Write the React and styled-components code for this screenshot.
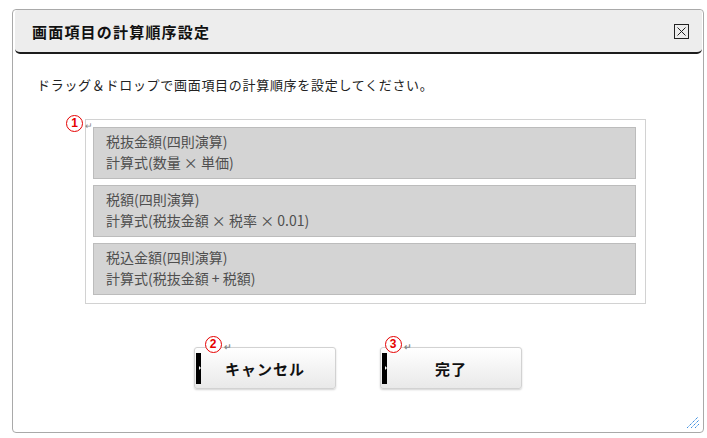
import React from 'react';
import styled, { createGlobalStyle } from 'styled-components';

const GlobalStyle = createGlobalStyle`
  body {
    margin: 0;
    background: #fff;
    font-family: "Noto Sans CJK JP", "Noto Sans", sans-serif;
  }
`;

const Dialog = styled.div`
  position: relative;
  box-sizing: border-box;
  width: 692px;
  height: 424px;
  margin: 9px 0 0 12px;
  border: 1px solid #a9a9a9;
  border-radius: 4px;
  background: #fff;
`;

const Header = styled.div`
  box-sizing: border-box;
  height: 44px;
  margin: 0 1px 0 2px;
  padding: 0 13px 0 17px;
  display: flex;
  align-items: center;
  justify-content: space-between;
  background: #ededed;
  border-bottom: 2px solid #1c1c1c;
  border-radius: 3px 3px 5px 5px;
`;

const Title = styled.div`
  font-size: 15px;
  font-weight: bold;
  letter-spacing: 1.2px;
  color: #111;
`;

const CloseBox = styled.div`
  width: 15px;
  height: 15px;
  display: flex;
  margin-top: 1px;
`;

const Instruction = styled.p`
  margin: 22px 0 0 24px;
  font-size: 13px;
  letter-spacing: 0.7px;
  line-height: 18px;
  color: #222;
`;

const ListWrap = styled.div`
  position: relative;
  width: 561px;
  margin: 25px 0 0 72px;
`;

const List = styled.div`
  box-sizing: border-box;
  display: flex;
  flex-direction: column;
  gap: 6px;
  padding: 7px 9px 8px 7px;
  border: 1px solid #d2d2d2;
`;

const Item = styled.div`
  box-sizing: border-box;
  height: 52px;
  padding: 3px 12px;
  background: #d4d4d4;
  border: 1px solid #bcbcbc;
  color: #4f4f4f;
  font-size: 14px;
  line-height: 21px;
`;

const Marker = styled.span`
  position: absolute;
  left: ${p => p.$left}px;
  top: ${p => p.$top}px;
  display: flex;
  align-items: center;
  gap: 2px;
`;

const Circle = styled.span`
  box-sizing: border-box;
  width: 17px;
  height: 17px;
  border: 1.6px solid #e60000;
  border-radius: 50%;
  background: #fff;
  color: #e60000;
  font-family: "Liberation Sans", sans-serif;
  font-weight: bold;
  font-size: 12px;
  line-height: 14px;
  text-align: center;
`;

const Return = styled.span`
  font-size: 9px;
  color: #888;
  margin-top: 3px;
`;

const ButtonRow = styled.div`
  display: flex;
  justify-content: center;
  gap: 44px;
  margin-top: 43px;
`;

const Button = styled.div`
  position: relative;
  box-sizing: border-box;
  width: 142px;
  height: 42px;
  display: flex;
  align-items: center;
  justify-content: center;
  border: 1px solid #d2d2d2;
  border-radius: 3px;
  background: linear-gradient(#ffffff, #e9e9e9);
  box-shadow: 0 1px 2px rgba(0, 0, 0, 0.18);
  font-size: 15px;
  font-weight: bold;
  color: #111;
  letter-spacing: 1px;

  &::before {
    content: "";
    position: absolute;
    left: 1px;
    top: 5px;
    width: 5px;
    height: 31px;
    background: #000;
  }

  &::after {
    content: "";
    position: absolute;
    left: 4px;
    top: 18px;
    border-left: 2px solid #fff;
    border-top: 2px solid transparent;
    border-bottom: 2px solid transparent;
  }
`;

const Grip = styled.svg`
  position: absolute;
  right: 3px;
  bottom: 3px;
`;

function Mark({ n, left, top }) {
  return (
    <Marker $left={left} $top={top}>
      <Circle>{n}</Circle>
      <Return>↵</Return>
    </Marker>
  );
}

const items = [
  ['税抜金額(四則演算)', '計算式(数量 × 単価)'],
  ['税額(四則演算)', '計算式(税抜金額 × 税率 × 0.01)'],
  ['税込金額(四則演算)', '計算式(税抜金額 + 税額)'],
];

export default function App() {
  return (
    <>
      <GlobalStyle />
      <Dialog>
        <Header>
          <Title>画面項目の計算順序設定</Title>
          <CloseBox>
            <svg width="15" height="15" viewBox="0 0 15 15">
              <rect x="0.5" y="0.5" width="14" height="14" fill="none" stroke="#222" />
              <path d="M3.5 3.5 L11.5 11.5 M11.5 3.5 L3.5 11.5" stroke="#222" strokeWidth="1" />
            </svg>
          </CloseBox>
        </Header>
        <Instruction>ドラッグ＆ドロップで画面項目の計算順序を設定してください。</Instruction>
        <ListWrap>
          <Mark n="1" left={-19} top={-4} />
          <List>
            {items.map(([name, formula]) => (
              <Item key={name}>
                {name}
                <br />
                {formula}
              </Item>
            ))}
          </List>
        </ListWrap>
        <ButtonRow>
          <Button>
            <Mark n="2" left={10} top={-12} />
            キャンセル
          </Button>
          <Button>
            <Mark n="3" left={4} top={-12} />
            完了
          </Button>
        </ButtonRow>
        <Grip width="14" height="13" viewBox="0 0 14 13">
          <path d="M1 12 L12 1 M5 12 L13 4 M9 12 L13 8" stroke="#3d8fe0" strokeWidth="1" strokeDasharray="1.5 0.6" fill="none" />
        </Grip>
      </Dialog>
    </>
  );
}
